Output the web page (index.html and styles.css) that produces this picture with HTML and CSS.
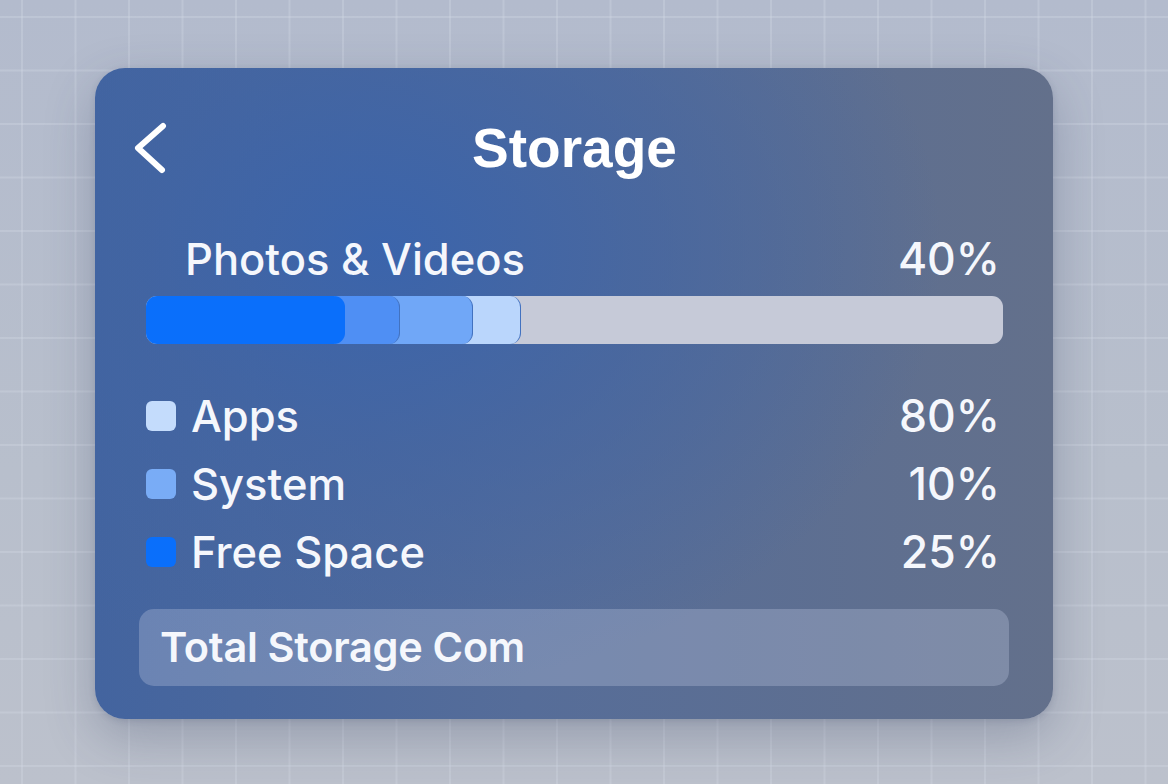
FILE: index.html
```html
<!DOCTYPE html>
<html>
	<head>
		<title>Storage</title>
		<link rel="stylesheet" href="styles.css">
	</head>
	<body>
		<div class="panel">
			<div class="panel-head">
				<button class="back" aria-label="Back">
					<svg width="34" height="52" viewBox="0 0 34 52">
						<path d="M29 4 L4 26 L28 48" fill="none" stroke="#fff" stroke-width="6" stroke-linecap="round" stroke-linejoin="round"/>
					</svg>
				</button>
				<h1 class="title">Storage</h1>
				<span></span>
			</div>

			<div class="usage-row">
				<span>Photos &amp; Videos</span>
				<span class="pct">40%</span>
			</div>

			<div class="bar">
				<div class="seg seg-free" style="width: 199px"></div>
				<div class="seg seg-system" style="width: 65px"></div>
				<div class="seg seg-mid" style="width: 83px"></div>
				<div class="seg seg-apps" style="width: 58px"></div>
			</div>

			<ul class="legend">
				<li><i class="dot dot-apps"></i><span class="name">Apps</span><span class="pct">80%</span></li>
				<li><i class="dot dot-system"></i><span class="name">System</span><span class="pct">10%</span></li>
				<li><i class="dot dot-free"></i><span class="name">Free Space</span><span class="pct">25%</span></li>
			</ul>

			<div class="total">Total Storage Com</div>
		</div>
	</body>
</html>
```

FILE: styles.css
```css
body {
	margin: 0;
	height: 784px;
	overflow: hidden;
	font-family: Inter, "Liberation Sans", Arial, sans-serif;
	color: #f5f7fc;
	background-color: #b6bdcc;
	background-image:
		linear-gradient(rgba(212, 218, 230, 0.32) 2px, transparent 2px),
		linear-gradient(90deg, rgba(212, 218, 230, 0.32) 2px, transparent 2px),
		linear-gradient(180deg, #b3bbcd 0%, #b8bfcc 60%, #bcc1cc 100%);
	background-size: 53.5px 53.5px, 53.5px 53.5px, 100% 100%;
	background-position: 21px 16px, 21px 16px, 0 0;
}

.panel {
	margin: 68px 0 0 95px;
	width: 958px;
	height: 651px;
	box-sizing: border-box;
	padding: 40px 50px 0 51px;
	border-radius: 30px;
	background:
		radial-gradient(ellipse 560px 440px at 30% 28%, rgba(58, 100, 172, 0.95) 0%, rgba(64, 100, 164, 0.65) 45%, rgba(90, 108, 142, 0) 100%),
		linear-gradient(90deg, #43649f 0%, #566d99 45%, #63708b 100%);
	box-shadow: 0 18px 50px rgba(50, 62, 92, 0.28), 0 2px 6px rgba(50, 62, 92, 0.15);
	display: flex;
	flex-direction: column;
}

.panel-head {
	display: grid;
	grid-template-columns: 1fr auto 1fr;
	align-items: center;
	height: 80px;
}
.back {
	background: none;
	border: none;
	padding: 0;
	margin-left: -12px;
	width: 34px;
	height: 52px;
	display: flex;
}
.title {
	margin: 0;
	font-family: "Liberation Sans", Arial, sans-serif;
	font-size: 55px;
	font-weight: bold;
	line-height: 80px;
	color: #fff;
}

.usage-row {
	display: flex;
	justify-content: space-between;
	margin-top: 46px;
	padding: 0 3px 0 39px;
	font-size: 43.5px;
	font-weight: 500;
	line-height: 50px;
}

.bar {
	display: flex;
	margin-top: 12px;
	height: 48px;
	border-radius: 11px;
	background: #c6cad8;
	overflow: hidden;
}
.seg {
	position: relative;
	height: 100%;
	border-radius: 0 11px 11px 0;
	box-sizing: border-box;
}
.seg + .seg {
	margin-left: -10px;
	border-right: 1.5px solid #4272c0;
}
.seg-free { background: #0a6ffb; z-index: 4; }
.seg-system { background: #4f8ff4; z-index: 3; }
.seg-mid { background: #70a7f7; z-index: 2; }
.seg-apps { background: #bad6fc; z-index: 1; }

.legend {
	list-style: none;
	margin: 38px 0 0;
	padding: 0 3px 0 0;
}
.legend li {
	display: flex;
	align-items: center;
	height: 68px;
	font-size: 43.5px;
	font-weight: 500;
}
.dot {
	width: 30px;
	height: 30px;
	border-radius: 6px;
	margin-right: 15px;
}
.dot-apps { background: #c4dcfc; }
.dot-system { background: #79acf6; }
.dot-free { background: #0a6ffb; }
.name {
	flex-grow: 1;
}
.pct {
	font-size: 44.5px;
}

.total {
	margin: 23px -6px 0 -7px;
	height: 77px;
	padding-left: 21px;
	border-radius: 15px;
	background: rgba(190, 200, 225, 0.32);
	font-size: 41.5px;
	font-weight: 600;
	letter-spacing: -0.3px;
	line-height: 77px;
}
```
